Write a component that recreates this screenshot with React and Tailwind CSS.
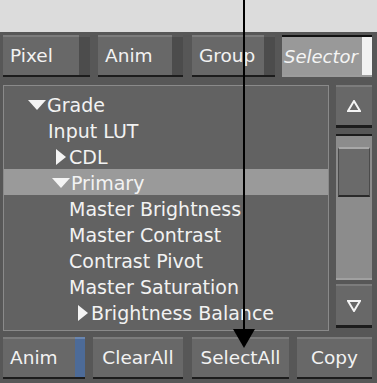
import React from "react";

const font = "font-['DejaVu_Sans',sans-serif]";

function Btn({ label, width, strip, selected, center, className = "" }) {
  if (selected) {
    return (
      <div
        className={`flex h-[42px] items-stretch border-t-2 border-[#111] border-b-2 border-b-[#9c9c9c] bg-[#999999] ${className}`}
        style={{ width }}
      >
        <div className="flex flex-1 items-center pl-[2px] text-[18px] italic text-[#f4f4f4]">{label}</div>
        <div className="w-[10px] bg-[#f2f2f2]" />
      </div>
    );
  }
  return (
    <div
      className={`flex h-[42px] items-stretch border-b-2 border-[#1c1c1c] ${className}`}
      style={{ width }}
    >
      <div
        className={`flex flex-1 items-center border-t-2 border-[#7c7c7c] bg-[#686868] text-[18.5px] text-[#f2f2f2] ${
          center ? "justify-center" : "pl-[7px]"
        }`}
      >
        {label}
      </div>
      {strip === "dark" && <div className="w-[11px] border-t-2 border-[#5a5a5a] bg-[#4c4c4c]" />}
      {strip === "blue" && <div className="w-[10px] border-t-2 border-[#6a86b0] bg-[#4d6b98]" />}
    </div>
  );
}

const rows = [
  { t: "Grade", indent: 28, arrow: "down" },
  { t: "Input LUT", indent: 48 },
  { t: "CDL", indent: 55, arrow: "right" },
  { t: "Primary", indent: 52, arrow: "down", hl: true },
  { t: "Master Brightness", indent: 69 },
  { t: "Master Contrast", indent: 69 },
  { t: "Contrast Pivot", indent: 69 },
  { t: "Master Saturation", indent: 69 },
  { t: "Brightness Balance", indent: 77, arrow: "right" },
];

function Arrow({ dir }) {
  if (dir === "down")
    return (
      <svg width="18" height="12" viewBox="0 0 18 12" className="mr-[1px] mt-[3px]">
        <polygon points="0,1 18,1 9,11" fill="#f4f4f4" />
      </svg>
    );
  return (
    <svg width="12" height="16" viewBox="0 0 12 16" className="mr-[2px] mt-[1px]">
      <polygon points="1,0 11,8 1,16" fill="#f4f4f4" />
    </svg>
  );
}

export default function App() {
  return (
    <div className={`relative h-[383px] w-[377px] overflow-hidden bg-[#dcdcdc] ${font}`}>
      <div className="mt-[32px] flex h-[351px] flex-col bg-[#575757] pl-[3px] pr-[5px] pt-[3px]">
        {/* top tabs */}
        <div className="flex gap-[8px]">
          <Btn label="Pixel" width={87} strip="dark" />
          <Btn label="Anim" width={85} strip="dark" />
          <Btn label="Group" width={83} strip="dark" className="ml-[1px]" />
          <Btn label="Selector" width={90} selected className="-ml-[1px]" />
        </div>

        {/* tree + scrollbar */}
        <div className="mt-[8px] flex h-[246px] gap-[7px]">
          <div className="flex-1 border border-[#8a8a8a] bg-[#626262] pt-[5px] text-[19px] leading-none text-[#f2f2f2]">
            {rows.map((r) => (
              <div
                key={r.t}
                className={`flex h-[26px] items-start pt-[5px] ${r.hl ? "bg-[#9a9a9a]" : ""}`}
                style={{ paddingLeft: r.indent - 4 }}
              >
                {r.arrow && <Arrow dir={r.arrow} />}
                <span>{r.t}</span>
              </div>
            ))}
          </div>
          <div className="flex w-[36px] flex-col">
            <div className="flex h-[43px] items-center justify-center border-b-[3px] border-t-2 border-[#1c1c1c] border-t-[#7c7c7c] bg-[#686868]">
              <svg width="14" height="12" viewBox="0 0 14 12">
                <polygon points="7,1 13,11 1,11" fill="none" stroke="#f4f4f4" strokeWidth="2" />
              </svg>
            </div>
            <div className="mt-[6px] flex h-[146px] flex-col border-t-2 border-[#1c1c1c] border-b-2 border-b-[#a0a0a0] bg-[#8c8c8c] px-[2px] pt-[11px]">
              <div className="h-[50px] border-t-2 border-[#a8a8a8] border-b-2 border-b-[#2a2a2a] border-x border-x-[#4a4a4a] bg-[#6a6a6a]" />
            </div>
            <div className="mt-[4px] flex h-[44px] items-center justify-center border-b-[3px] border-t-2 border-[#1c1c1c] border-t-[#7c7c7c] bg-[#686868]">
              <svg width="14" height="12" viewBox="0 0 14 12">
                <polygon points="1,1 13,1 7,11" fill="none" stroke="#f4f4f4" strokeWidth="2" />
              </svg>
            </div>
          </div>
        </div>

        {/* bottom buttons */}
        <div className="mt-[6px] flex">
          <Btn label="Anim" width={82} strip="blue" />
          <Btn label="ClearAll" width={90} center className="ml-[8px]" />
          <Btn label="SelectAll" width={97} center className="ml-[9px]" />
          <Btn label="Copy" width={75} center className="ml-[8px]" />
        </div>
      </div>

      {/* callout arrow */}
      <svg className="absolute left-0 top-0" width="377" height="383" viewBox="0 0 377 383">
        <line x1="244" y1="0" x2="244" y2="332" stroke="#000" strokeWidth="2" />
        <polygon points="233,329 255,329 244,348" fill="#000" />
      </svg>
    </div>
  );
}
